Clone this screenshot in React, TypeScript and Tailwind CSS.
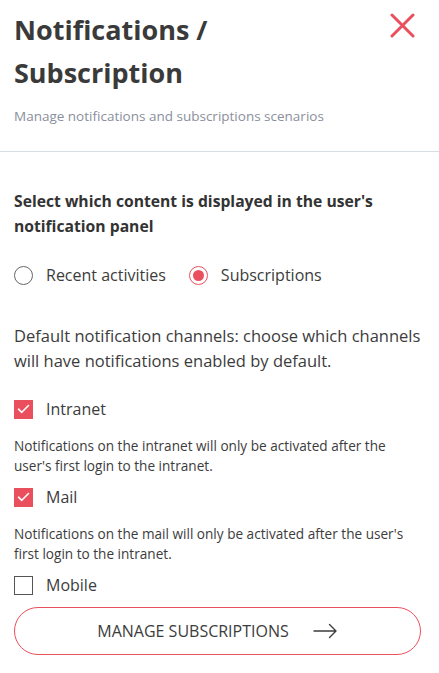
import { useState } from 'react';

const RED = '#ea4f5d';

const Check = ({ checked }: { checked: boolean }) => (
  <span
    className={`flex h-[19px] w-[19px] shrink-0 items-center justify-center ${
      checked ? 'bg-[#ea4f5d]' : 'border border-[#555] bg-white'
    }`}
  >
    {checked && (
      <svg width="13" height="10" viewBox="0 0 13 10" fill="none">
        <path d="M1.5 5.2 L4.8 8.3 L11.5 1.5" stroke="white" strokeWidth="1.6" strokeLinecap="round" strokeLinejoin="round" />
      </svg>
    )}
  </span>
);

const Radio = ({ checked }: { checked: boolean }) => (
  <span
    className={`flex h-[19px] w-[19px] shrink-0 items-center justify-center rounded-full border ${
      checked ? 'border-[#ea4f5d]' : 'border-[#666]'
    }`}
  >
    {checked && <span className="h-[11px] w-[11px] rounded-full bg-[#ea4f5d]" />}
  </span>
);

const channels = [
  {
    id: 'intranet',
    label: 'Intranet',
    note: "Notifications on the intranet will only be activated after the user's first login to the intranet.",
  },
  {
    id: 'mail',
    label: 'Mail',
    note: "Notifications on the mail will only be activated after the user's first login to the intranet.",
  },
  { id: 'mobile', label: 'Mobile', note: '' },
];

export default function App() {
  const [mode, setMode] = useState('subscriptions');
  const [enabled, setEnabled] = useState<Record<string, boolean>>({ intranet: true, mail: true, mobile: false });

  return (
    <div className="min-h-[673px] w-[439px] bg-white text-[#3c3c3c] [font-family:'Open_Sans',sans-serif]">
      {/* Header */}
      <header className="px-[14px] pt-[8px]">
        <div className="flex items-start justify-between">
          <h1 className="text-[27px] font-bold leading-[43px] text-[#3a3a3a]">
            Notifications /
            <br />
            Subscription
          </h1>
          <button className="mr-[10px] mt-[5px]" aria-label="close">
            <svg width="25" height="25" viewBox="0 0 25 25" fill="none">
              <path d="M2 2 L23 23 M23 2 L2 23" stroke={RED} strokeWidth="3" strokeLinecap="round" />
            </svg>
          </button>
        </div>
        <p className="mt-[12px] pb-[25px] text-[13.5px] text-[#8a8f9c]">Manage notifications and subscriptions scenarios</p>
      </header>
      <div className="h-px bg-[#d5dde5]" />

      <section className="px-[14px] pt-[37px]">
        <h2 className="text-[15.7px] font-bold leading-[25px] text-[#333]">
          Select which content is displayed in the user's notification panel
        </h2>

        <div className="mt-[24px] flex gap-[23px] text-[16px]">
          {[
            { id: 'recent', label: 'Recent activities' },
            { id: 'subscriptions', label: 'Subscriptions' },
          ].map((o) => (
            <label key={o.id} className="flex cursor-pointer items-center gap-[13px]" onClick={() => setMode(o.id)}>
              <Radio checked={mode === o.id} />
              <span>{o.label}</span>
            </label>
          ))}
        </div>

        <p className="mt-[36px] text-[16.5px] leading-[25px]">
          Default notification channels: choose which channels will have notifications enabled by default.
        </p>

        <div className="mt-[24px] flex flex-col">
          {channels.map((c) => (
            <div key={c.id} className="mb-[9px]">
              <label
                className="flex cursor-pointer items-center gap-[13px] text-[16px]"
                onClick={() => setEnabled({ ...enabled, [c.id]: !enabled[c.id] })}
              >
                <Check checked={enabled[c.id]} />
                <span>{c.label}</span>
              </label>
              {c.note && <p className="mt-[15px] max-w-[396px] text-[13.6px] leading-[20px]">{c.note}</p>}
            </div>
          ))}
        </div>

        <button className="mt-[1px] flex h-[48px] w-[407px] items-center justify-center gap-[24px] rounded-full border border-[#ea4f5d] text-[16px] text-[#3c3c3c]">
          <span>MANAGE SUBSCRIPTIONS</span>
          <svg width="25" height="16" viewBox="0 0 25 16" fill="none">
            <path d="M1 8 H23 M16.5 1.5 L23 8 L16.5 14.5" stroke="#3c3c3c" strokeWidth="1.4" strokeLinecap="round" strokeLinejoin="round" />
          </svg>
        </button>
      </section>
    </div>
  );
}
